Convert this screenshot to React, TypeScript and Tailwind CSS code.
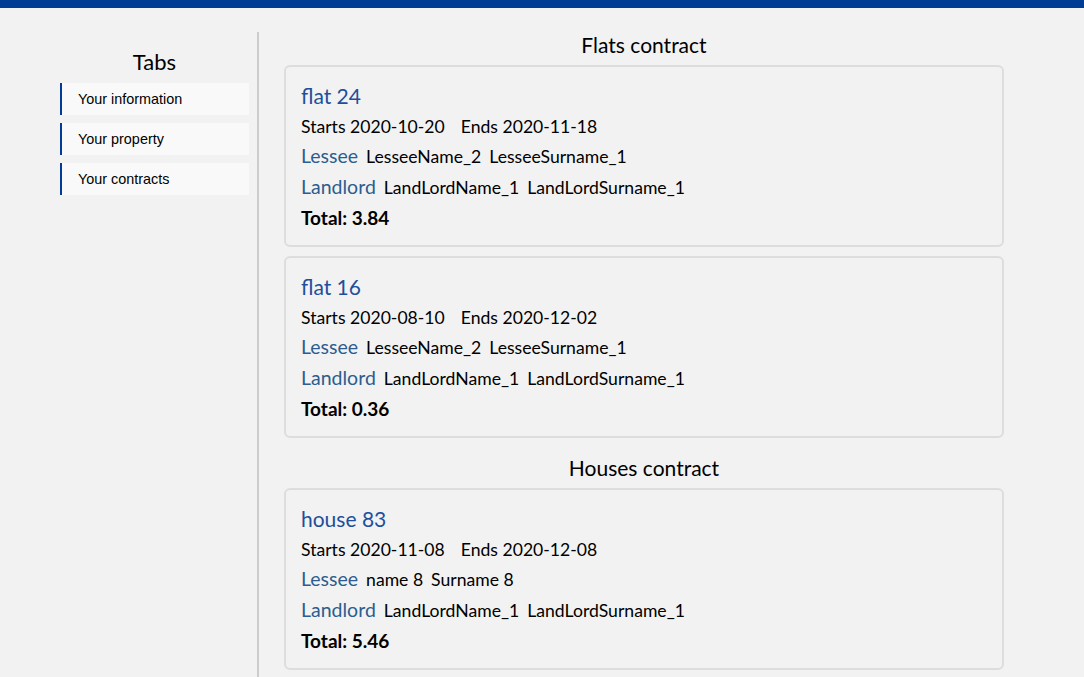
import React from "react";

type Contract = {
  title: string;
  starts: string;
  ends: string;
  lessee: [string, string];
  landlord: [string, string];
  total: string;
};

const flats: Contract[] = [
  { title: "flat 24", starts: "2020-10-20", ends: "2020-11-18", lessee: ["LesseeName_2", "LesseeSurname_1"], landlord: ["LandLordName_1", "LandLordSurname_1"], total: "3.84" },
  { title: "flat 16", starts: "2020-08-10", ends: "2020-12-02", lessee: ["LesseeName_2", "LesseeSurname_1"], landlord: ["LandLordName_1", "LandLordSurname_1"], total: "0.36" },
];
const houses: Contract[] = [
  { title: "house 83", starts: "2020-11-08", ends: "2020-12-08", lessee: ["name 8", "Surname 8"], landlord: ["LandLordName_1", "LandLordSurname_1"], total: "5.46" },
];

function Card({ c }: { c: Contract }) {
  return (
    <div className="border-2 border-[#dddddd] rounded-[6px] h-[182px] pl-[15px] pt-[14px] text-[17.6px] text-black">
      <div className="h-[31px] text-[21px] leading-[30px] text-[#1d4f9c]">{c.title}</div>
      <div className="h-[29px] leading-[30px]">
        Starts {c.starts}
        <span className="ml-[16px]">Ends {c.ends}</span>
      </div>
      <div className="h-[30px] leading-[30px] flex items-baseline">
        <span className="text-[19.5px] text-[#2c5d8f]">Lessee</span>
        <span className="ml-[8px]">{c.lessee[0]}</span>
        <span className="ml-[8px]">{c.lessee[1]}</span>
      </div>
      <div className="h-[31px] leading-[31px] flex items-baseline">
        <span className="text-[19.5px] text-[#2c5d8f]">Landlord</span>
        <span className="ml-[8px]">{c.landlord[0]}</span>
        <span className="ml-[8px]">{c.landlord[1]}</span>
      </div>
      <div className="h-[32px] leading-[32px] font-bold text-[19px]">Total: {c.total}</div>
    </div>
  );
}

export default function App() {
  return (
    <div className="min-h-[677px] bg-[#f2f2f2] font-['Lato',sans-serif]">
      <div className="h-[8px] bg-[#003c94]" />
      <div className="flex mt-[24px]">
        <div className="w-[257px] pl-[60px] pr-[8px] shrink-0">
          <div className="text-center text-[22px] leading-[26px] mt-[17px] text-black">Tabs</div>
          <div className="mt-[8px] flex flex-col gap-[8px] font-['Liberation_Sans',Arial,sans-serif] text-[14.4px] text-black">
            {["Your information", "Your property", "Your contracts"].map((t) => (
              <div key={t} className="h-[32px] border-l-2 border-[#003c94] bg-[#f9f9f9] pl-[16px] pt-[1px] flex items-center">
                {t}
              </div>
            ))}
          </div>
        </div>
        <div className="w-[2px] bg-[#cccccc] min-h-[645px] shrink-0" />
        <div className="pl-[25px] w-[745px] shrink-0">
          <div className="text-center text-[21px] leading-[26px] text-black">Flats contract</div>
          <div className="mt-[7px] flex flex-col gap-[9px]">
            {flats.map((c) => (
              <Card key={c.title} c={c} />
            ))}
          </div>
          <div className="text-center text-[21px] leading-[26px] text-black mt-[17px]">Houses contract</div>
          <div className="mt-[7px] flex flex-col gap-[9px]">
            {houses.map((c) => (
              <Card key={c.title} c={c} />
            ))}
          </div>
        </div>
      </div>
    </div>
  );
}
